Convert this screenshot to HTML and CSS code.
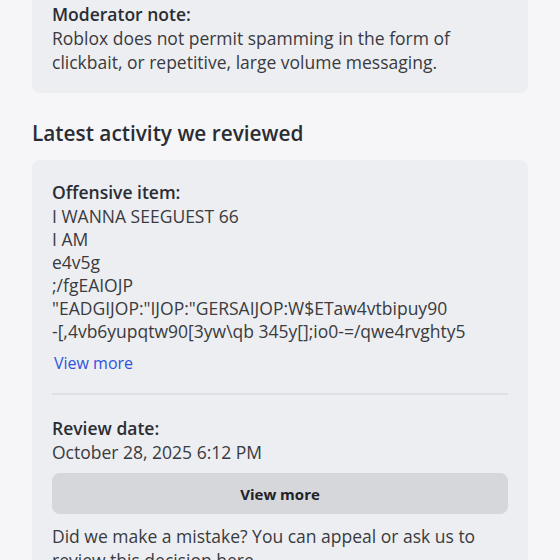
FILE: index.html
```html
<!DOCTYPE html>
<html lang="en">
<head>
<meta charset="utf-8">
<link rel="stylesheet" href="styles.css">
</head>
<body>
<main class="page">
  <section class="card note-card">
    <div class="label">Moderator note:</div>
    <p class="text">Roblox does not permit spamming in the form of clickbait, or repetitive, large volume messaging.</p>
  </section>

  <h2 class="heading">Latest activity we reviewed</h2>

  <section class="card activity-card">
    <div class="label">Offensive item:</div>
    <div class="item-text">I WANNA SEEGUEST 66<br>I AM<br>e4v5g<br>;/fgEAIOJP<br>"EADGIJOP:"IJOP:"GERSAIJOP:W$ETaw4vtbipuy90<br>-[,4vb6yupqtw90[3yw\qb 345y[];io0-=/qwe4rvghty5</div>
    <a class="link" href="#">View more</a>
    <hr class="divider">
    <div class="label">Review date:</div>
    <div class="text">October 28, 2025 6:12 PM</div>
    <button class="button">View more</button>
    <p class="text appeal">Did we make a mistake? You can appeal or ask us to review this decision here.</p>
  </section>
</main>
</body>
</html>
```

FILE: styles.css
```css
html, body {
  margin: 0;
  padding: 0;
  background: #f6f6f8;
}
body {
  font-family: "Open Sans", "Noto Sans", sans-serif;
  color: #393b3f;
}
.page {
  padding: 0 32px;
}
.card {
  background: #edeef1;
  border-radius: 8px;
  padding: 20px;
}
.note-card {
  padding-top: 2px;
  padding-bottom: 19px;
  border-top-left-radius: 0;
  border-top-right-radius: 0;
}
.label {
  font-size: 17.5px;
  line-height: 24px;
  font-weight: 600;
  color: #2a2d33;
}
.text {
  margin: 0;
  font-size: 17.5px;
  line-height: 24px;
}
.heading {
  margin: 26px 0 13px;
  font-size: 20.8px;
  line-height: 28px;
  font-weight: 600;
  color: #2a2d33;
}
.activity-card {
  padding-top: 20px;
}
.item-text {
  font-size: 17.5px;
  line-height: 23px;
  margin-top: 1px;
}
.link {
  display: block;
  margin-top: 8px;
  padding-left: 2px;
  font-size: 16px;
  line-height: 24px;
  color: #2f52e0;
  text-decoration: none;
}
.divider {
  border: 0;
  border-top: 2px solid #dfe0e3;
  margin: 18px 0 21px;
}
.button {
  display: block;
  width: 100%;
  height: 41px;
  margin-top: 9px;
  border: 0;
  border-radius: 8px;
  background: #d6d7db;
  font-family: inherit;
  font-size: 15px;
  font-weight: 700;
  color: #1f2126;
}
.appeal {
  margin-top: 10px;
}
```
